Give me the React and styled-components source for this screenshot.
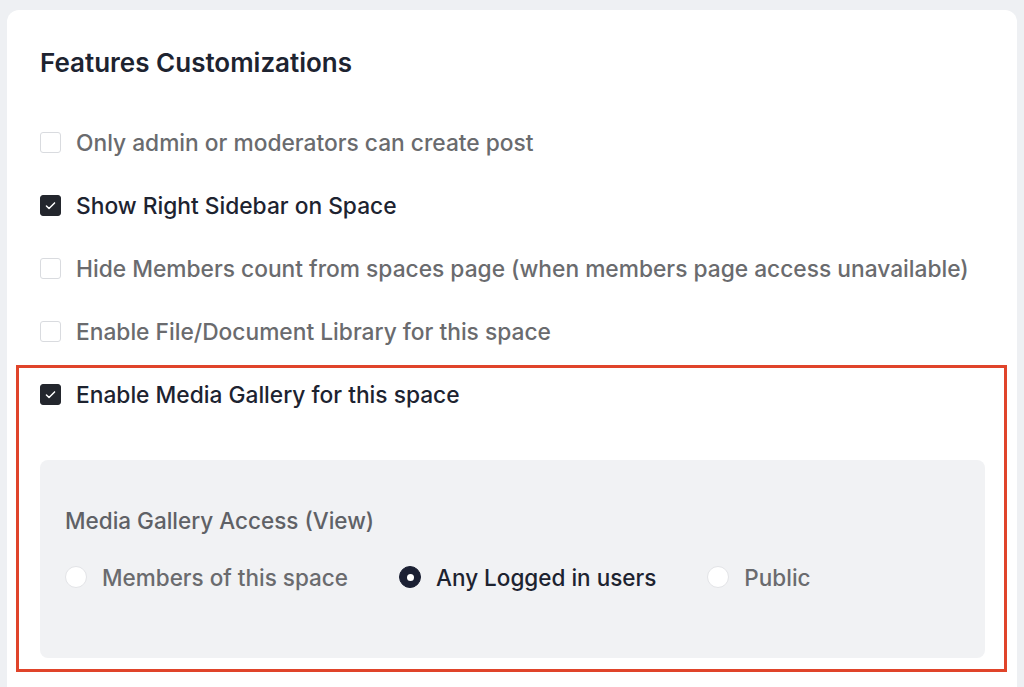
import React, { useState } from "react";
import styled, { createGlobalStyle } from "styled-components";

const GlobalStyle = createGlobalStyle`
  html, body { margin: 0; padding: 0; background: #eef0f3; }
  body { font-family: Inter, "Noto Sans", "Liberation Sans", sans-serif; -webkit-font-smoothing: antialiased; }
  * { box-sizing: border-box; }
`;

const Page = styled.div`
  padding: 10px 7px 0 7px;
  height: 687px;
  overflow: hidden;
`;

const Card = styled.section`
  background: #ffffff;
  border-radius: 12px;
  padding: 37px 32px 40px 33px;
  min-height: 720px;
`;

const Heading = styled.h2`
  margin: 0 0 32px 0;
  font-size: 26px;
  line-height: 32px;
  font-weight: 600;
  color: #1d2330;
`;

const Row = styled.label`
  display: flex;
  align-items: center;
  gap: 15px;
  height: ${(p) => p.$h || 63}px;
  cursor: pointer;
`;

const Box = styled.span`
  width: 21px;
  height: 21px;
  border-radius: 3px;
  flex: none;
  display: inline-flex;
  align-items: center;
  justify-content: center;
  background: ${(p) => (p.$checked ? "#23262d" : "#ffffff")};
  border: 1px solid ${(p) => (p.$checked ? "#23262d" : "#d9dbdf")};
`;

const Label = styled.span`
  font-size: ${(p) => p.$size || 22.75}px;
  font-weight: 500;
  color: ${(p) => (p.$active ? "#1d2330" : "#6a6b6e")};
  white-space: nowrap;
`;

const Highlight = styled.div`
  margin: 2px -22px 0 -24px;
  border: 3px solid #e0442a;
  padding: 0 19px 11px 21px;
`;

const Panel = styled.div`
  margin-top: 40px;
  background: #f1f2f4;
  border-radius: 8px;
  padding: 47px 25px 67px 25px;
`;

const PanelTitle = styled.div`
  font-size: 22.5px;
  line-height: 28px;
  font-weight: 500;
  color: #5f6166;
  margin-bottom: 28px;
`;

const Radios = styled.div`
  display: flex;
  align-items: center;
  gap: 51px;
  height: 28px;
`;

const RadioItem = styled.label`
  display: flex;
  align-items: center;
  gap: 15px;
  cursor: pointer;
`;

const Dot = styled.span`
  width: 22px;
  height: 22px;
  border-radius: 50%;
  flex: none;
  display: inline-flex;
  align-items: center;
  justify-content: center;
  background: ${(p) => (p.$checked ? "#1b2033" : "#ffffff")};
  border: 1px solid ${(p) => (p.$checked ? "#1b2033" : "#e3e4e7")};
  &::after {
    content: "";
    width: 7px;
    height: 7px;
    border-radius: 50%;
    background: #ffffff;
    display: ${(p) => (p.$checked ? "block" : "none")};
  }
`;

const Check = () => (
  <svg width="13" height="13" viewBox="0 0 16 16" fill="none">
    <path d="M3 8.5l3.2 3.2L13 4.8" stroke="#fff" strokeWidth="1.8" strokeLinecap="round" strokeLinejoin="round" />
  </svg>
);

const CheckRow = ({ checked, label, h, onToggle }) => (
  <Row $h={h} onClick={onToggle}>
    <Box $checked={checked}>{checked && <Check />}</Box>
    <Label $active={checked}>{label}</Label>
  </Row>
);

export default function App() {
  const [opts, setOpts] = useState([false, true, false, false, true]);
  const [access, setAccess] = useState("logged");
  const labels = [
    "Only admin or moderators can create post",
    "Show Right Sidebar on Space",
    "Hide Members count from spaces page (when members page access unavailable)",
    "Enable File/Document Library for this space",
    "Enable Media Gallery for this space",
  ];
  const toggle = (i) => setOpts((o) => o.map((v, j) => (j === i ? !v : v)));
  const radios = [
    { id: "members", label: "Members of this space" },
    { id: "logged", label: "Any Logged in users" },
    { id: "public", label: "Public" },
  ];
  return (
    <Page>
      <GlobalStyle />
      <Card>
        <Heading>Features Customizations</Heading>
        {labels.slice(0, 4).map((l, i) => (
          <CheckRow key={l} checked={opts[i]} label={l} onToggle={() => toggle(i)} />
        ))}
        <Highlight>
          <CheckRow h={52} checked={opts[4]} label={labels[4]} onToggle={() => toggle(4)} />
          <Panel>
            <PanelTitle>Media Gallery Access (View)</PanelTitle>
            <Radios>
              {radios.map((r) => (
                <RadioItem key={r.id} onClick={() => setAccess(r.id)}>
                  <Dot $checked={access === r.id} />
                  <Label $size={22.5} $active={access === r.id}>{r.label}</Label>
                </RadioItem>
              ))}
            </Radios>
          </Panel>
        </Highlight>
      </Card>
    </Page>
  );
}
